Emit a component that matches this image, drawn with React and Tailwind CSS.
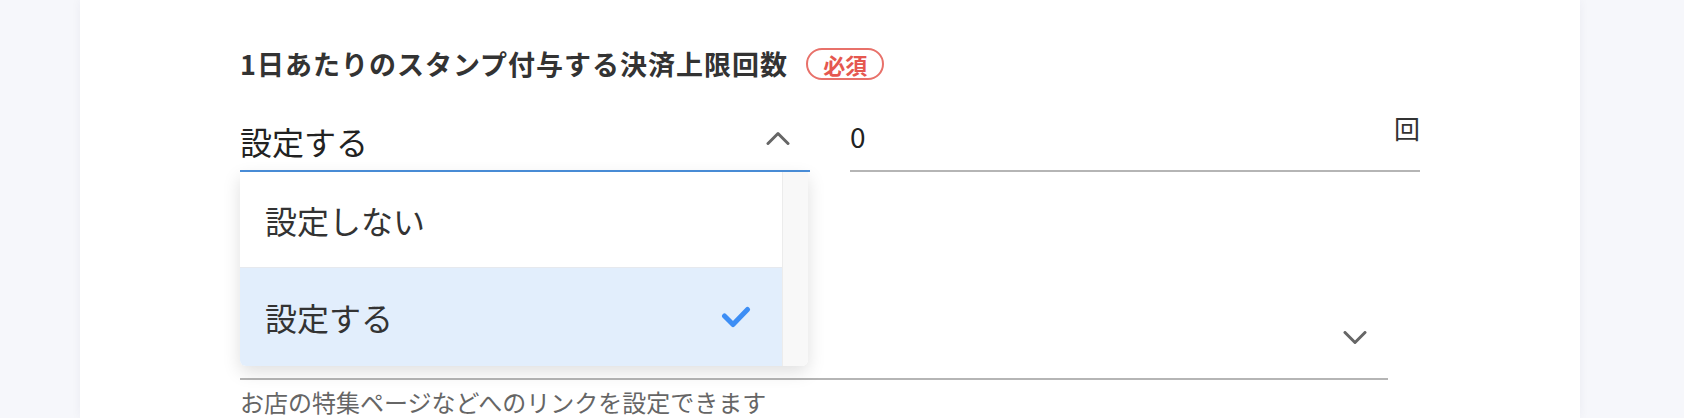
export default function App() {
  return (
    <div className="w-full h-[418px] overflow-hidden bg-[#f6f7fb] font-['Noto_Sans_CJK_JP','Noto_Sans',sans-serif]">
      <div className="ml-[80px] w-[1500px] h-full bg-white shadow-[0_0_10px_rgba(30,40,80,0.05)] pt-[48px] px-[160px]">
        {/* Field 1 label */}
        <div className="flex items-center gap-[18px]">
          <span className="text-[27px] leading-[30px] font-bold text-[#333] tracking-[1px]">
            1日あたりのスタンプ付与する決済上限回数
          </span>
          <span className="h-[32px] px-[15px] rounded-full border-2 border-[#e8716a] text-[#e5574f] text-[22px] leading-[26px] font-bold flex items-center">
            必須
          </span>
        </div>

        {/* Field 1 row */}
        <div className="grid grid-cols-2 gap-x-[40px] mt-[31px] relative z-10">
          <div className="relative">
            <div className="h-[61px] border-b-2 border-[#4a8fdb] flex items-center justify-between">
              <span className="text-[32px] leading-[32px] text-[#222]">設定する</span>
              <svg width="24" height="14" viewBox="0 0 24 14" className="mr-[20px] mb-[5px]" fill="none">
                <polyline points="2,12.5 12,2.5 22,12.5" stroke="#666" strokeWidth="3" strokeLinecap="round" strokeLinejoin="round" />
              </svg>
            </div>
            {/* Dropdown menu */}
            <div className="absolute top-full left-0 w-[568px] flex bg-white rounded-b-[6px] shadow-[0_6px_18px_rgba(0,0,0,0.13)] overflow-hidden">
              <div className="flex-1 flex flex-col">
                <div className="h-[95px] flex items-center pl-[25px] text-[32px] leading-[32px] text-[#333] bg-white">
                  設定しない
                </div>
                <div className="h-[1px] bg-[#e6e9ee]" />
                <div className="h-[98px] flex items-center justify-between pl-[25px] pr-[31px] text-[32px] leading-[32px] text-[#333] bg-[#e2eefc]">
                  <span>設定する</span>
                  <svg width="30" height="24" viewBox="0 0 30 24" fill="none">
                    <polyline points="3.5,11 12,19.5 26.5,4.5" stroke="#3d8ef5" strokeWidth="5" strokeLinecap="round" strokeLinejoin="round" />
                  </svg>
                </div>
              </div>
              <div className="w-[26px] bg-[#f8f8f8] border-l border-[#ececec]" />
            </div>
          </div>

          <div className="h-[61px] border-b-2 border-[#b5b5b5] flex items-start justify-between">
            <span className="mt-[11px] text-[28px] leading-[28px] text-[#222]">0</span>
            <span className="mt-[4px] text-[26px] leading-[26px] text-[#333]">回</span>
          </div>
        </div>

        {/* Field 2 (mostly hidden behind the menu) */}
        <div className="mt-[147px] w-[1148px]">
          <div className="h-[61px] border-b-2 border-[#b5b5b5] flex items-start justify-end">
            <svg width="24" height="14" viewBox="0 0 24 14" className="mt-[12px] mr-[21px]" fill="none">
              <polyline points="2,1.5 12,11.5 22,1.5" stroke="#666" strokeWidth="3" strokeLinecap="round" strokeLinejoin="round" />
            </svg>
          </div>
          <div className="mt-[10px] text-[24px] leading-[24px] text-[#666]">
            お店の特集ページなどへのリンクを設定できます
          </div>
        </div>
      </div>
    </div>
  );
}
